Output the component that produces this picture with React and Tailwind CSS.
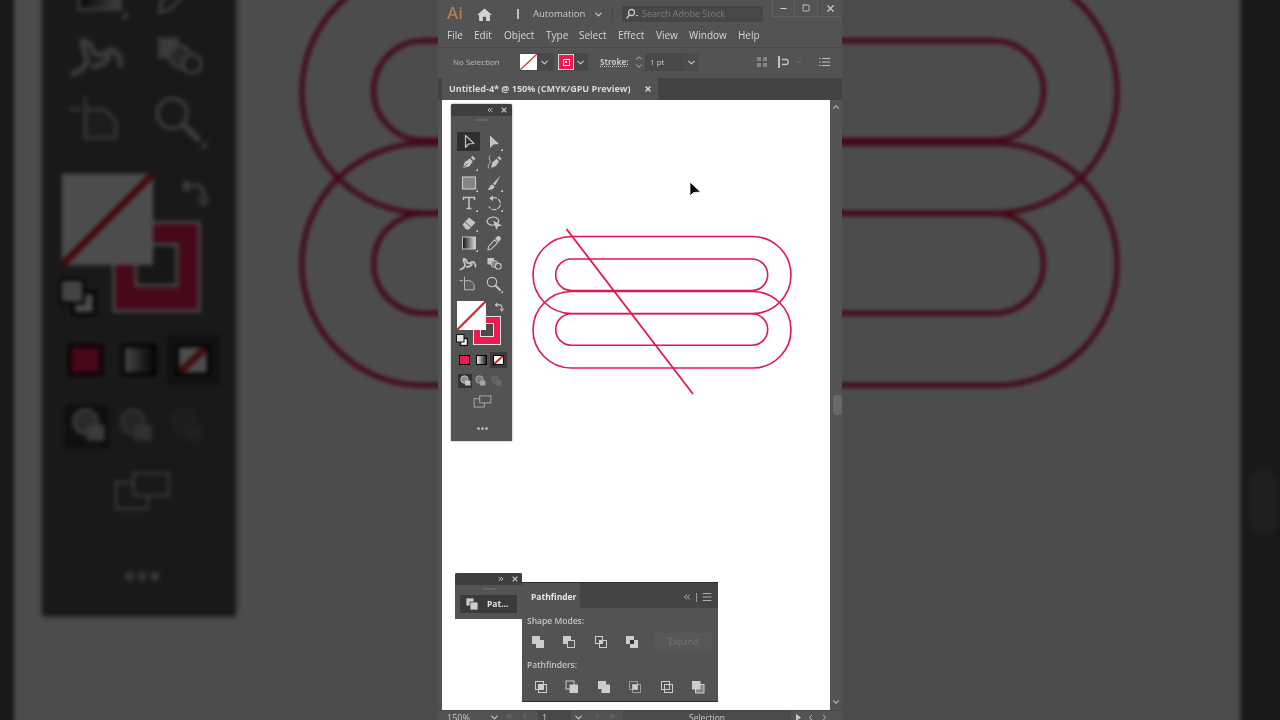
import { ChevronDown, ChevronLeft, ChevronRight, ChevronUp, ChevronsLeft, ChevronsRight, Menu, Minus, Square, X } from 'lucide-react';

const PINK = '#e0174f';

function Chevron({ className = '' }) {
  return <ChevronDown size={11} strokeWidth={2.5} className={'shrink-0 ' + className} />;
}

// 20x20 tool glyphs for the Illustrator toolbar
function ToolIcon({ corner, children }) {
  return (
    <svg width="20" height="20" viewBox="0 0 20 20" className="text-[#c4c4c4]" fill="currentColor">
      {children}
      {corner && <path d="M19 16.5V19H16.5Z" />}
    </svg>
  );
}

const tools = [
  { selected: true, icon: <path d="M6.5 3.5V15.5L9.5 12L15 11.5Z" fill="none" stroke="currentColor" strokeWidth="1.2" strokeLinejoin="round" /> },
  { corner: true, icon: <path d="M6 3.5V16L9.5 12.5L15 12Z" /> },
  { corner: true, icon: <><path d="M4 16L5.8 10L11 6.5L13.8 9.5L10.5 14.2Z" /><path d="M12 5.5L13.5 3.8L16.5 6.8L14.8 8.5Z" /><path d="M4.5 15.5L8.5 11.5" stroke="#535353" strokeWidth=".8" /></> },
  { icon: <><path d="M7 16L8.3 10.5L12.5 6.8L15 9.5L12 14Z" /><path d="M13.5 5.8L15 4L17.5 6.8L16 8.5Z" /><path d="M6.5 3.5C3 6 8 9 5.5 11.5 4 13 3.5 15 5.5 16.5" fill="none" stroke="currentColor" strokeWidth="1" /></> },
  { corner: true, icon: <rect x="3.5" y="4" width="13" height="12" fill="#858585" stroke="currentColor" strokeWidth="1.2" /> },
  { corner: true, icon: <><path d="M16.5 2.5L9 10.5L11 12.5Z" /><path d="M8.5 11.5C6 11.5 6 15 3.5 16.5 7 17.5 10.5 16 10.5 13.5Z" /></> },
  { corner: true, icon: <path d="M4.5 7V4.5H15.5V7M10 4.5V15.5M7.5 15.5H12.5" fill="none" stroke="currentColor" strokeWidth="1.5" /> },
  { corner: true, icon: <><path d="M8 5.2A6 6 0 1 1 5 13.5" fill="none" stroke="currentColor" strokeWidth="1.2" strokeDasharray="5 1.2" /><path d="M9 2.5V8L5 5.2Z" /></> },
  { corner: true, icon: <><path d="M3.5 11.5L10 4.5L16.5 9.5L10 16.5H7Z" /><path d="M6 9L12 14" stroke="#535353" strokeWidth=".9" /></> },
  { icon: <><path d="M13.5 10.5C16.5 7 13 3.5 8.5 4.2 4 5 1.5 8 4 10.5 6 12.5 9.5 12.5 11 11.5" fill="none" stroke="currentColor" strokeWidth="1.2" /><path d="M9 7.5L18 12.5L14 13.5L12.5 17Z" /></> },
  { corner: true, icon: <><defs><linearGradient id="toolGrad"><stop offset="0" stopColor="#111" /><stop offset="1" stopColor="#ddd" /></linearGradient></defs><rect x="3.5" y="4" width="13" height="12" fill="url(#toolGrad)" stroke="currentColor" strokeWidth="1" /></> },
  { icon: <><path d="M4 17L4.5 13.5L10.5 7L13.5 9.8L7.2 16Z" fill="none" stroke="currentColor" strokeWidth="1.1" /><path d="M11 5.5L13.2 3.5C15 2 18 5 16.5 6.8L14.5 9.2Z" /></> },
  { icon: <path d="M1.5 15.5C4 14.5 6 13 6 11 6 9 4 7 4.5 5 6 5 7.5 6.5 8 8.5 10 10.5 11.5 9 13 8 15 7.5 16.5 9.5 16.5 12.5M8 13C10 13 11.5 12.5 13 10" fill="none" stroke="currentColor" strokeWidth="1.8" strokeLinecap="round" strokeLinejoin="round" /> },
  { icon: <><rect x="3.5" y="4" width="6.5" height="6.5" /><circle cx="10.5" cy="10" r="3.4" fill="#858585" stroke="currentColor" strokeWidth="1" /><circle cx="14.3" cy="12.3" r="2.9" fill="#535353" stroke="currentColor" strokeWidth="1.1" /></> },
  { icon: <path d="M0.5 6.7H4M5.5 2.7V15.8H15.2V10.5L11.5 6.7H5.5" fill="#5e5e5e" stroke="#b4b4b4" strokeWidth="1" /> },
  { corner: true, icon: <><circle cx="8" cy="8" r="4.7" fill="none" stroke="currentColor" strokeWidth="1.2" /><path d="M11.5 11.5L16 16" stroke="currentColor" strokeWidth="2" strokeLinecap="round" /></> },
];

function NoneSwatch({ className = '' }) {
  return (
    <svg viewBox="0 0 20 20" preserveAspectRatio="none" className={'block ' + className}>
      <rect width="20" height="20" fill="#fff" />
      <path d="M0 20L20 0" stroke="#d81f2a" strokeWidth="1.5" />
    </svg>
  );
}

function Toolbar() {
  return (
    <div className="absolute left-[9px] top-[4px] flex h-[337px] w-[61px] flex-col rounded-t-[2px] bg-[#535353] shadow-[0_0_2px_rgba(0,0,0,0.5)]">
      <div className="flex h-[12px] shrink-0 items-center justify-end gap-[6px] rounded-t-[2px] bg-[#3f3f3f] pr-[4px] text-[#bdbdbd]">
        <ChevronsLeft size={8} strokeWidth={3} />
        <X size={8} strokeWidth={3.5} />
      </div>
      <div className="mx-auto mt-[3px] h-[2px] w-[14px] bg-[#626262]" />

      <div className="ml-[5px] mt-[10.85px] grid w-[50px] grid-cols-2">
        {tools.map((tool, i) => (
          <div key={i} className="flex h-[20.3px] items-center justify-center">
            <div className={tool.selected ? 'flex h-[19px] w-[23px] items-center justify-center rounded-[1px] bg-[#2f2f2f]' : 'flex'}>
              <ToolIcon corner={tool.corner}>{tool.icon}</ToolIcon>
            </div>
          </div>
        ))}
      </div>

      {/* fill + stroke */}
      <div className="relative ml-[6px] mt-[6.75px] h-[44px] w-[50px] shrink-0">
        <div className="absolute left-[16px] top-[15px] flex h-[29px] w-[28px] items-center justify-center border border-[#e6e6e6] bg-[#ec1b52]">
          <div className="h-[14px] w-[14px] border border-[#e6e6e6] bg-[#4a4a4a]" />
        </div>
        <NoneSwatch className="absolute left-0 top-0 h-[29px] w-[29px]" />
        <svg width="10" height="10" viewBox="0 0 12 12" className="absolute left-[37px] top-[1px] text-[#c4c4c4]" fill="none" stroke="currentColor" strokeWidth="1.4">
          <path d="M1.5 3.5L4 1.5M1.5 3.5L4 5.5M1.5 3.5H7C9 3.5 9.5 5 9.5 8M7.5 8L9.5 10.5L11.5 8" />
        </svg>
        <svg width="12" height="12" viewBox="0 0 12 12" className="absolute left-[-1px] top-[33px]">
          <rect x="4.5" y="4.5" width="7" height="7" fill="#fff" stroke="#111" strokeWidth="1.4" />
          <rect x="0.5" y="0.5" width="7.5" height="7.5" fill="#e4e4e4" stroke="#111" strokeWidth="1" />
        </svg>
      </div>

      {/* colour / gradient / none */}
      <div className="ml-[8px] mt-[7px] flex h-[16px] shrink-0 items-center">
        <div className="h-[10px] w-[11px] border border-black bg-[#ec1b52]" />
        <div className="ml-[6px] h-[10px] w-[11px] border border-black bg-linear-to-r from-[#eeeeee] to-[#222222]" />
        <div className="ml-[3px] flex h-[16px] w-[17px] items-center justify-center bg-[#3a3a3a]">
          <svg width="11" height="10" viewBox="0 0 11 10" className="border border-black">
            <rect width="11" height="10" fill="#fff" />
            <path d="M0 10L11 0" stroke="#d81f2a" strokeWidth="2.6" />
          </svg>
        </div>
      </div>

      {/* draw modes */}
      <div className="ml-[7px] mt-[6px] flex h-[14px] shrink-0 items-center">
        <div className="flex h-[14px] w-[14px] items-center justify-center bg-[#333333]">
          <DrawMode />
        </div>
        <div className="flex h-[14px] w-[17px] items-center justify-center">
          <DrawMode dim="opacity-70" />
        </div>
        <div className="flex h-[14px] w-[15px] items-center justify-center">
          <DrawMode dim="opacity-20" />
        </div>
      </div>

      {/* screen mode */}
      <svg width="19" height="13" viewBox="0 0 20 14" fill="#535353" stroke="#adadad" strokeWidth="1" className="ml-[21.5px] mt-[7px] shrink-0">
        <rect x="1" y="4" width="11" height="9" />
        <rect x="7" y="1" width="12" height="7.5" />
      </svg>

      <div className="ml-[26px] mt-[19px] flex w-[11px] justify-between">
        <span className="h-[3px] w-[3px] rounded-full bg-[#b0b0b0]" />
        <span className="h-[3px] w-[3px] rounded-full bg-[#b0b0b0]" />
        <span className="h-[3px] w-[3px] rounded-full bg-[#b0b0b0]" />
      </div>
    </div>
  );
}

function DrawMode({ dim = '' }) {
  return (
    <svg width="11" height="11" viewBox="0 0 11 11" className={dim}>
      <circle cx="4.5" cy="4.5" r="3.7" fill="#8a8a8a" stroke="#c4c4c4" />
      <rect x="5" y="5.5" width="5.5" height="5" fill="#c4c4c4" />
    </svg>
  );
}

function Artwork() {
  return (
    <svg width="388" height="610" viewBox="0 0 388 610" fill="none" stroke={PINK} strokeWidth="1.6" className="absolute left-0 top-0">
      <rect x="91" y="136.5" width="258" height="77" rx="38.5" />
      <rect x="91" y="191.5" width="258" height="76.5" rx="38.25" />
      <rect x="113.7" y="159" width="212" height="31.5" rx="15.75" />
      <rect x="113.7" y="213.7" width="212" height="31.5" rx="15.75" />
      <path d="M124.5 129L251 294" strokeWidth="1.8" />
    </svg>
  );
}

function Cursor() {
  return (
    <svg width="13" height="18" viewBox="0 0 13 18" className="absolute left-[247px] top-[81px]">
      <path d="M1 1V15L4.5 11.5L11.5 11Z" fill="#000" stroke="#fff" strokeWidth=".8" />
    </svg>
  );
}

// pathfinder buttons, 16x16
function PfIcon({ children }) {
  return (
    <svg width="16" height="16" viewBox="0 0 16 16" fill="#cdcdcd" stroke="#cdcdcd" strokeWidth="1">
      {children}
    </svg>
  );
}

const shapeModes = [
  <><rect x="2" y="2" width="8" height="8" stroke="none" /><rect x="6" y="6" width="8" height="8" stroke="none" /></>,
  <><rect x="2" y="2" width="8" height="8" stroke="none" /><rect x="6.5" y="6.5" width="7" height="7" fill="#535353" /></>,
  <><rect x="2.5" y="2.5" width="7" height="7" fill="none" /><rect x="6.5" y="6.5" width="7" height="7" fill="none" /><rect x="6" y="6" width="4" height="4" stroke="none" /></>,
  <><rect x="2" y="2" width="8" height="8" stroke="none" /><rect x="6" y="6" width="8" height="8" stroke="none" /><rect x="6" y="6" width="4" height="4" fill="#333" stroke="none" /></>,
];

const pathfinders = [
  <><rect x="2.5" y="2.5" width="8" height="8" fill="none" /><rect x="5.5" y="5.5" width="8" height="8" fill="none" /><rect x="5.5" y="5.5" width="5" height="5" stroke="none" /></>,
  <><rect x="2" y="2" width="8" height="8" fill="none" /><rect x="5.5" y="5.5" width="8.5" height="8.5" stroke="none" /></>,
  <><rect x="2" y="2" width="8" height="8" stroke="none" /><rect x="5.5" y="5.5" width="8.5" height="8.5" stroke="none" /></>,
  <><rect x="2.5" y="2.5" width="8" height="8" fill="none" opacity=".6" /><rect x="5.5" y="5.5" width="8" height="8" fill="none" opacity=".6" /><rect x="5.5" y="5.5" width="5" height="5" stroke="none" /></>,
  <><rect x="2.5" y="2.5" width="8" height="8" fill="none" /><rect x="5.5" y="5.5" width="8" height="8" fill="none" /></>,
  <><rect x="5.5" y="5.5" width="8.5" height="8.5" fill="#858585" /><rect x="2" y="2" width="8.5" height="8.5" stroke="none" /></>,
];

function PathfinderPanels() {
  return (
    <>
      <div className="absolute left-[13px] top-[473px] flex h-[46px] w-[67px] flex-col rounded-t-[2px] bg-[#535353]">
        <div className="flex h-[12px] shrink-0 items-center justify-end gap-[6px] rounded-t-[2px] bg-[#3f3f3f] pr-[3px] text-[#bdbdbd]">
          <ChevronsRight size={8} strokeWidth={3} />
          <X size={8} strokeWidth={3.5} />
        </div>
        <div className="mx-auto mt-[3px] h-[2px] w-[14px] bg-[#626262]" />
        <div className="ml-[5px] mt-[5px] flex h-[18px] w-[57px] items-center bg-[#3a3a3a] pl-[5px]">
          <svg width="14" height="14" viewBox="0 0 14 14" fill="#cdcdcd" stroke="#3a3a3a" strokeWidth=".8">
            <rect x="1" y="1" width="8" height="8" />
            <rect x="5" y="5" width="8" height="8" />
          </svg>
          <span className="ml-[8px] pt-[1px] text-[8.5px] font-bold text-[#e4e4e4]">Pat...</span>
        </div>
      </div>

      <div className="absolute left-[80px] top-[482px] h-[120px] w-[196px] border-t border-b border-[#2e2e2e] bg-[#535353] text-[#c4c4c4]">
        <div className="flex h-[25px] items-center bg-[#444444]">
          <div className="flex h-[25px] w-[58px] items-center bg-[#535353] pl-[9px] pt-[3px] text-[8.5px] font-bold text-[#e8e8e8]">Pathfinder</div>
          <ChevronsLeft size={10} strokeWidth={2} className="ml-[102px] mt-[3px] text-[#cdcdcd]" />
          <div className="ml-[4px] mt-[3px] h-[9px] w-px bg-[#9a9a9a]" />
          <Menu size={12} strokeWidth={1.5} className="ml-[4px] mt-[3px] text-[#cdcdcd]" />
        </div>
        <div className="ml-[5px] mt-[7px] text-[8.5px] font-semibold leading-[12px]">Shape Modes:</div>
        <div className="mt-[6px] flex h-[18px] items-center">
          <div className="ml-[8px] flex gap-[15.3px]">
            {shapeModes.map((icon, i) => (
              <PfIcon key={i}>{icon}</PfIcon>
            ))}
          </div>
          <div className="ml-[14px] flex h-[18px] w-[59px] items-center justify-center bg-[#575757] text-[8.5px] text-[#757575]">Expand</div>
        </div>
        <div className="ml-[5px] mt-[8px] text-[8.5px] font-semibold leading-[12px]">Pathfinders:</div>
        <div className="ml-[11px] mt-[8px] flex gap-[15.4px]">
          {pathfinders.map((icon, i) => (
            <PfIcon key={i}>{icon}</PfIcon>
          ))}
        </div>
      </div>
    </>
  );
}

// the canvas row; used twice, the big dimmed copy behind the video has no floating panels
function Workspace({ overlay }) {
  return (
    <div className="flex h-[610px] shrink-0">
      <div className="w-[4px] shrink-0 bg-[#535353]" />
      <div className="relative w-[388px] shrink-0 bg-white">
        <Artwork />
        <Toolbar />
        {overlay}
      </div>
      <div className="flex w-[12px] shrink-0 flex-col items-center bg-[#535353] text-[#a8a8a8]">
        <ChevronUp size={10} strokeWidth={3} className="mt-[2px]" />
        <div className="ml-[2px] mt-[283px] h-[20px] w-[9px] rounded-[4px] bg-[#686868]" />
        <ChevronDown size={10} strokeWidth={3} className="mt-auto mb-[3px]" />
      </div>
    </div>
  );
}

function TitleBar() {
  return (
    <div className="flex h-[25px] shrink-0 items-center pt-[3px] text-[#c8c8c8]">
      <span className="ml-[9px] -mt-[3px] w-[17px] text-[17px] font-semibold leading-none text-[#b27a50]">Ai</span>
      <svg width="15" height="13" viewBox="0 0 16 14" fill="#d4d4d4" className="ml-[13px] shrink-0">
        <path d="M8 0.5L16 7.5H13.8V14H9.8V9.5H6.2V14H2.2V7.5H0Z" />
      </svg>
      <div className="ml-[25px] h-[10px] w-[2px] bg-[#c0c0c0]" />
      <span className="ml-[14px] w-[54px] text-[9.5px]">Automation</span>
      <Chevron className="ml-[6px]" />
      <div className="ml-[8px] h-[16px] w-px bg-[#474747]" />
      <div className="ml-[9px] flex h-[16px] w-[141px] items-center bg-[#474747] pl-[3px]">
        <svg width="14" height="12" viewBox="0 0 14 12" fill="none" stroke="#c8c8c8" strokeWidth="1.3" className="shrink-0">
          <circle cx="6.5" cy="4.5" r="3" />
          <path d="M4.5 7L1.5 10.5" />
          <path d="M10.5 7H13.5L12 8.5Z" fill="#c8c8c8" stroke="none" />
        </svg>
        <span className="ml-[3px] text-[9px] text-[#7c7c7c]">Search Adobe Stock</span>
      </div>
      <div className="ml-[9px] -mt-[3px] flex h-[17px] w-[70px] self-start text-[#d0d0d0]">
        <div className="flex w-[23px] items-center justify-center border border-t-0 border-[#606060]">
          <Minus size={9} strokeWidth={3} />
        </div>
        <div className="flex w-[23px] items-center justify-center border-r border-b border-[#606060]">
          <Square size={8} strokeWidth={2.5} />
        </div>
        <div className="flex w-[24px] items-center justify-center border-b border-[#606060]">
          <X size={11} strokeWidth={2.5} />
        </div>
      </div>
    </div>
  );
}

function MenuBar() {
  const items = [
    ['File', 'w-[27px]'],
    ['Edit', 'w-[30px]'],
    ['Object', 'w-[42px]'],
    ['Type', 'w-[33px]'],
    ['Select', 'w-[39px]'],
    ['Effect', 'w-[38px]'],
    ['View', 'w-[33px]'],
    ['Window', 'w-[49px]'],
    ['Help', 'w-[30px]'],
  ];
  return (
    <div className="flex h-[22px] shrink-0 items-center pb-[2px] pl-[9px] text-[10px] text-[#d6d6d6]">
      {items.map(([label, width]) => (
        <span key={label} className={width}>{label}</span>
      ))}
    </div>
  );
}

function ControlBar() {
  return (
    <div className="flex h-[31px] shrink-0 items-center border-t border-[#494949] pb-[2px] text-[#c8c8c8]">
      <span className="ml-[15px] w-[67px] text-[8px] text-[#bdbdbd]">No Selection</span>
      <div className="flex h-[18px] w-[34px] items-center bg-[#484848]">
        <NoneSwatch className="h-[16px] w-[17px]" />
        <Chevron className="ml-[2px]" />
      </div>
      <div className="ml-[4px] flex h-[18px] w-[30px] items-center bg-[#484848]">
        <div className="flex h-[16px] w-[16px] items-center justify-center border border-[#d8d8d8] bg-[#ec1b52]">
          <div className="flex h-[7px] w-[7px] items-center justify-center border border-white">
            <div className="h-[2px] w-[2px] bg-white" />
          </div>
        </div>
        <Chevron className="ml-px" />
      </div>
      <span className="ml-[12px] w-[34px] text-[8px] font-bold underline decoration-dotted">Stroke:</span>
      <div className="flex w-[10px] flex-col items-center">
        <ChevronUp size={10} strokeWidth={2} className="-mb-[2px]" />
        <ChevronDown size={10} strokeWidth={2} />
      </div>
      <div className="ml-px flex h-[18px] w-[38px] items-center bg-[#484848] pl-[5px] text-[8px]">1 pt</div>
      <div className="flex h-[18px] w-[16px] items-center justify-center bg-[#4c4c4c]">
        <Chevron />
      </div>
      <div className="ml-[58px] grid h-[10px] w-[10px] shrink-0 grid-cols-2 gap-[2px] opacity-40">
        <span className="bg-[#cfcfcf]" />
        <span className="bg-[#cfcfcf]" />
        <span className="bg-[#cfcfcf]" />
        <span className="bg-[#cfcfcf]" />
      </div>
      <svg width="12" height="12" viewBox="0 0 12 12" fill="none" stroke="#c0c0c0" strokeWidth="1.3" className="ml-[11px] shrink-0">
        <path d="M1 0V12" strokeWidth="2" />
        <path d="M4 3.5H8C11 3.5 11 8.5 8 8.5H4" />
      </svg>
      <ChevronDown size={8} strokeWidth={2.5} className="ml-[5px] text-[#777777]" />
      <svg width="11" height="10" viewBox="0 0 11 10" fill="none" stroke="#c0c0c0" strokeWidth="1" className="ml-[16px] shrink-0">
        <path d="M0 1.5H1.5M3 1.5H11M0 5H1.5M3 5H11M0 8.5H1.5M3 8.5H11" />
      </svg>
    </div>
  );
}

function TabBar() {
  return (
    <div className="flex h-[22px] shrink-0 bg-[#434343] pl-[4px]">
      <div className="flex w-[216px] items-center bg-[#535353] pl-[7px] text-[9px] font-bold text-[#d8d8d8]">
        <span className="w-[195px]">Untitled-4* @ 150% (CMYK/GPU Preview)</span>
        <X size={8} strokeWidth={4} />
      </div>
    </div>
  );
}

function StatusBar() {
  return (
    <div className="flex h-[10px] shrink-0 items-start overflow-hidden border-t border-[#474747] bg-[#535353] text-[9px] leading-[13px] text-[#c8c8c8]">
      <span className="ml-[9px] w-[36px]">150%</span>
      <Chevron className="mt-[1px] ml-[6px]" />
      <div className="ml-[5px] flex h-[10px] w-[32px] items-center gap-[6px] text-[#757575]">
        <ChevronsLeft size={9} strokeWidth={2.5} />
        <ChevronLeft size={9} strokeWidth={2.5} />
      </div>
      <div className="ml-[1px] h-[10px] w-[33px] bg-[#474747] pl-[4px]">1</div>
      <Chevron className="mt-[1px] ml-[2px]" />
      <div className="ml-[9px] flex h-[10px] w-[30px] items-center gap-[6px] text-[#757575]">
        <ChevronRight size={9} strokeWidth={2.5} />
        <ChevronsRight size={9} strokeWidth={2.5} />
      </div>
      <div className="flex h-[10px] w-[168px] justify-center bg-[#4b4b4b] text-[8.5px]">Selection</div>
      <div className="ml-[5px] flex items-center gap-[5px] pt-[2px]">
        <svg width="5" height="7" viewBox="0 0 5 7" fill="#c8c8c8"><path d="M0 0L5 3.5L0 7Z" /></svg>
        <ChevronLeft size={9} strokeWidth={2.5} />
        <ChevronRight size={9} strokeWidth={2.5} />
      </div>
    </div>
  );
}

export default function App() {
  return (
    <div className="relative h-screen w-screen overflow-hidden bg-[#191919]" style={{ fontFamily: '"Open Sans", "Liberation Sans", sans-serif' }}>
      {/* blurred letterbox: same window zoomed behind the portrait video */}
      <div className="absolute inset-0 flex justify-center" aria-hidden="true">
        <div className="flex h-[720px] w-[404px] shrink-0 scale-[3.16] flex-col bg-[#535353] blur-[0.7px] brightness-[0.3]">
          <div className="h-[100px] shrink-0" />
          <Workspace />
        </div>
      </div>

      <div className="relative mx-auto flex h-[720px] w-[404px] flex-col bg-[#535353] blur-[0.3px]">
        <TitleBar />
        <MenuBar />
        <ControlBar />
        <TabBar />
        <Workspace
          overlay={
            <>
              <Cursor />
              <PathfinderPanels />
            </>
          }
        />
        <StatusBar />
      </div>
    </div>
  );
}
